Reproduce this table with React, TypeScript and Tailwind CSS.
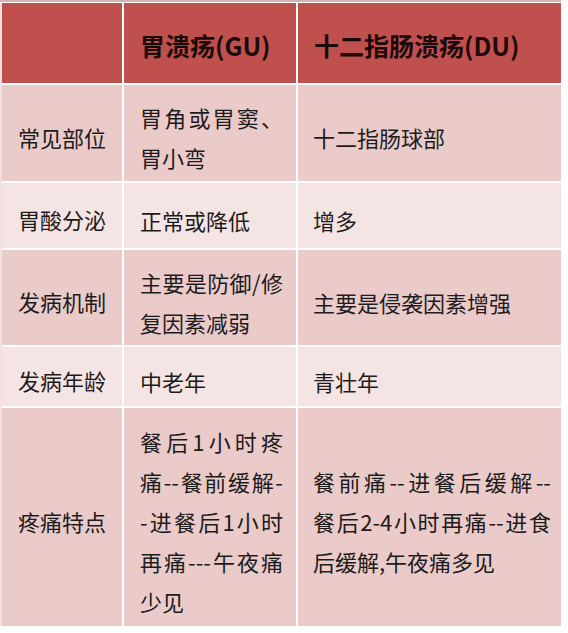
const font = { fontFamily: '"Noto Sans CJK SC", "Liberation Sans", sans-serif' };

type Row = { label: string; gu: string[]; du: string[]; h: string; tone: "dark" | "light" };

const rows: Row[] = [
  { label: "常见部位", gu: ["胃角或胃窦、", "胃小弯"], du: ["十二指肠球部"], h: "h-[96px]", tone: "dark" },
  { label: "胃酸分泌", gu: ["正常或降低"], du: ["增多"], h: "h-[65px]", tone: "light" },
  { label: "发病机制", gu: ["主要是防御/修", "复因素减弱"], du: ["主要是侵袭因素增强"], h: "h-[95px]", tone: "dark" },
  { label: "发病年龄", gu: ["中老年"], du: ["青壮年"], h: "h-[59px]", tone: "light" },
  {
    label: "疼痛特点",
    gu: ["餐后1小时疼", "痛--餐前缓解-", "-进餐后1小时", "再痛---午夜痛", "少见"],
    du: ["餐前痛--进餐后缓解--", "餐后2-4小时再痛--进食", "后缓解,午夜痛多见"],
    h: "h-[218px]",
    tone: "dark",
  },
];

function Lines({ lines, width }: { lines: string[]; width: string }) {
  return (
    <div className={`${width} leading-[40px]`}>
      {lines.map((l, i) => (
        <div
          key={i}
          className={lines.length > 1 && i < lines.length - 1 ? "[text-align-last:justify] text-justify" : ""}
        >
          {l}
        </div>
      ))}
    </div>
  );
}

export default function App() {
  return (
    <div className="w-[568px] h-[633px] bg-white" style={font}>
      <div className="h-[2px] w-[561px] bg-[#d6b3b0]" />
      <div className="flex mt-[1px]">
        <div className="w-[2px] bg-[#f3e0df]" />
        <div className="grid grid-cols-[120px_172px_263px] gap-[2px] bg-white text-[22px] text-[#1c1c1c]">
          <div className="h-[80px] bg-[#c0504d]" />
          <div className="h-[80px] bg-[#c0504d] flex items-center pl-4 pt-[6px] font-bold text-[25px] text-[#1a0a0a]">
            胃溃疡(GU)
          </div>
          <div className="h-[80px] bg-[#c0504d] flex items-center pl-4 pt-[6px] font-bold text-[25px] text-[#1a0a0a]">
            十二指肠溃疡(DU)
          </div>
          {rows.map((r) => {
            const bg = r.tone === "dark" ? "bg-[#ebcaca]" : "bg-[#f5e4e4]";
            return (
              <div key={r.label} className="contents">
                <div className={`${r.h} ${bg} flex items-center pl-4 pt-[8px]`}>{r.label}</div>
                <div className={`${r.h} ${bg} flex items-center pl-4 pt-[8px]`}>
                  <Lines lines={r.gu} width="w-[143px]" />
                </div>
                <div className={`${r.h} ${bg} flex items-center pl-[15px] pt-[8px]`}>
                  <Lines lines={r.du} width="w-[238px]" />
                </div>
              </div>
            );
          })}
        </div>
      </div>
    </div>
  );
}
